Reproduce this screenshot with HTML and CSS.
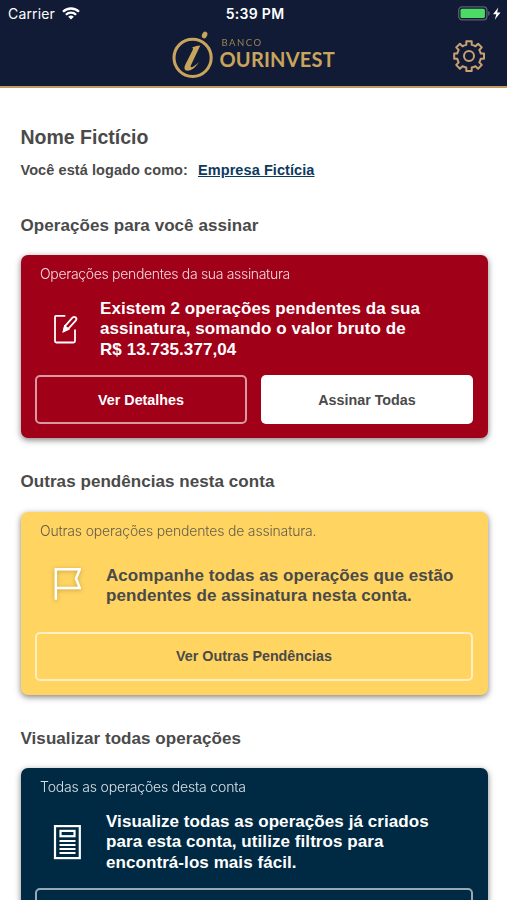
FILE: index.html
```html
<!DOCTYPE html>
<html lang="pt-BR">
<head>
  <meta charset="utf-8">
  <title>Banco Ourinvest</title>
  <link rel="stylesheet" href="styles.css">
</head>

<body>
  <div class="header">
    <div class="status-bar">
      <div class="carrier">
        <span>Carrier</span>
        <svg width="18" height="13" viewBox="0 0 18 13" fill="none" stroke="#fff" stroke-width="2.3">
          <path d="M1 4.8a11.3 11.3 0 0 1 16 0"/>
          <path d="M3.9 7.8a7.2 7.2 0 0 1 10.2 0"/>
          <path d="M9 12.6L6.2 9.8a4 4 0 0 1 5.6 0z" fill="#fff" stroke="none"/>
        </svg>
      </div>
      <div class="clock">5:39 PM</div>
      <div class="battery">
        <svg width="44" height="16" viewBox="0 0 44 16">
          <rect x="0.7" y="0.9" width="28.2" height="13" rx="3.4" fill="none" stroke="#596071" stroke-width="1.3"/>
          <rect x="2.5" y="2.7" width="24.4" height="9.4" rx="1.6" fill="#4cd964"/>
          <path d="M30.2 5c2 .5 2 4.3 0 4.8z" fill="#596071"/>
          <path d="M40.3 1.5L35 8.3h3.3L36.8 13.7l5.7-7.2h-3.4z" fill="#fff"/>
        </svg>
      </div>
    </div>
    <div class="nav">
      <div class="logo">
        <svg width="42" height="48" viewBox="0 0 42 48">
          <circle cx="20.6" cy="26.8" r="18.6" fill="none" stroke="#c9a55c" stroke-width="3"/>
          <ellipse cx="32.6" cy="4" rx="2.500" ry="3.500" transform="rotate(28 32.6 4)" fill="#c9a55c"/>
          <path d="M20 16.500C23 15.300 25.500 14.900 28.300 14.600L18.800 34.600C17.900 37.200 20.500 37 27 31.300C22.700 37.900 18.200 40 15 39.600C12 39.200 12 36.500 13.500 33.200L20.700 19C21.300 17.600 21 17 20 16.500Z" fill="#c9a55c"/>
        </svg>
        <div class="logo-text">
          <span class="logo-small">BANCO</span>
          <span class="logo-big">OURINVEST</span>
        </div>
      </div>
      <svg class="gear" width="32" height="32" viewBox="0 0 32 32" fill="none" stroke="#c9a072" stroke-width="2" stroke-linejoin="round">
        <path d="M13.3 1.2h5.4v3.6q2.2.5 3.8 1.5l2.6-2.6 3.7 3.7-2.5 2.6q1 1.6 1.4 3.5h3.3v5.2h-3.3q-.4 2-1.4 3.7l2.5 2.5-3.7 3.8-2.6-2.5q-1.7 1-3.8 1.4v3.4h-5.4v-3.4q-2-.4-3.8-1.4l-2.6 2.5-3.7-3.8 2.5-2.5q-1-1.7-1.4-3.7H1.200v-5.200h3.100q.4-1.900 1.400-3.500L3.200 7.400l3.700-3.700 2.600 2.600q1.700-1 3.800-1.500z"/>
        <circle cx="16" cy="16.1" r="5"/>
      </svg>
    </div>
  </div>

  <div class="content">
    <div class="user-name">Nome Fictício</div>
    <div class="logged">
      <span>Você está logado como:</span>
      <a class="company" href="#">Empresa Fictícia</a>
    </div>

    <div class="heading">Operações para você assinar</div>
    <div class="card card-red">
      <div class="card-label">Operações pendentes da sua assinatura</div>
      <div class="card-body">
        <svg class="card-icon" width="28" height="36" viewBox="0 0 28 36" fill="none" stroke="#fff" stroke-width="1.8">
          <path d="M12.300 3.900H3Q2 3.900 2 4.900V29Q2 30.500 3.300 30.500H20.500Q22 30.500 22 29V17.500"/>
          <path d="M10.800 19L12 14.200 19.700 5.400q1.600-1.200 3 .1 1.400 1.400.2 2.900L15 17.200z" stroke-linejoin="round"/>
          <path d="M10.600 19.300l1.300-5 3.400 2.700z" fill="#fff"/>
        </svg>
        <div class="card-text">Existem 2 operações pendentes da sua<br>assinatura, somando o valor bruto de<br>R$ 13.735.377,04</div>
      </div>
      <div class="buttons">
        <button class="button">Ver Detalhes</button>
        <button class="button button-white">Assinar Todas</button>
      </div>
    </div>

    <div class="heading">Outras pendências nesta conta</div>
    <div class="card card-yellow">
      <div class="card-label">Outras operações pendentes de assinatura.</div>
      <div class="card-body">
        <svg class="card-icon" width="28" height="36" viewBox="0 0 28 36" fill="none" stroke="#fff" stroke-width="2.5">
          <path d="M2.800 31.800V1.300H26.800L23 10.500l3.800 9.500H2.800"/>
        </svg>
        <div class="card-text">Acompanhe todas as operações que estão<br>pendentes de assinatura nesta conta.</div>
      </div>
      <div class="buttons">
        <button class="button">Ver Outras Pendências</button>
      </div>
    </div>

    <div class="heading">Visualizar todas operações</div>
    <div class="card card-blue">
      <div class="card-label">Todas as operações desta conta</div>
      <div class="card-body">
        <svg class="card-icon" width="28" height="36" viewBox="0 0 28 36" fill="none" stroke="#fff" stroke-width="2.2">
          <rect x="2" y="1.1" width="24.800" height="32"/>
          <rect x="7.500" y="5.900" width="14" height="5.300"/>
          <path d="M6.500 16h16M6.500 20h16M6.500 24h16M6.500 28h16" stroke-width="2"/>
        </svg>
        <div class="card-text">Visualize todas as operações já criados<br>para esta conta, utilize filtros para<br>encontrá-los mais fácil.</div>
      </div>
      <div class="buttons">
        <button class="button"></button>
      </div>
    </div>
  </div>
</body>
</html>
```

FILE: styles.css
```css
html,
body {
  height: 100%;
  margin: 0;
  overflow: hidden;
}

body {
  display: flex;
  flex-direction: column;
  font-family: "Liberation Sans", Arial, sans-serif;
  color: #4a4a4a;
  background: #ffffff;
}

.header {
  box-sizing: border-box;
  flex: none;
  height: 88px;
  background: #111b36;
  border-bottom: 2px solid #c39b62;
}

.status-bar {
  display: grid;
  grid-template-columns: 1fr auto 1fr;
  align-items: center;
  height: 27px;
  padding: 0 5px 0 8px;
  font-family: Inter, sans-serif;
  font-size: 14px;
  color: #ffffff;
}

.carrier {
  display: flex;
  align-items: center;
  gap: 7px;
  letter-spacing: 0.15px;
}

.clock {
  font-weight: 600;
  letter-spacing: 0.3px;
}

.battery {
  display: flex;
  justify-content: flex-end;
}

.nav {
  display: flex;
  justify-content: space-between;
  padding: 4px 22px 0 172px;
}

.logo {
  display: flex;
  gap: 5.5px;
  color: #c9a55c;
  font-family: Lato, sans-serif;
}

.logo-text {
  display: flex;
  flex-direction: column;
  padding-top: 7px;
}

.logo-small {
  font-size: 9.5px;
  line-height: 10px;
  letter-spacing: 1.5px;
  padding-left: 2px;
  opacity: 0.75;
}

.logo-big {
  margin-top: 1px;
  font-size: 20px;
  line-height: 20px;
  font-weight: bold;
  letter-spacing: 0.2px;
}

.gear {
  margin-top: 9px;
}

.content {
  flex: 1;
  min-height: 0;
  overflow: hidden;
  padding: 38px 19.5px 0 20.5px;
}

.user-name {
  font-size: 19.5px;
  line-height: 22px;
  font-weight: bold;
}

.logged {
  display: flex;
  gap: 10px;
  margin-top: 13px;
  font-size: 14.5px;
  line-height: 18px;
  font-weight: bold;
  letter-spacing: 0.08px;
}

.company {
  color: #0c3a5f;
}

.heading {
  margin: 37px 0 19px;
  font-size: 17px;
  line-height: 20px;
  font-weight: bold;
  letter-spacing: 0.06px;
}

.card {
  box-sizing: border-box;
  height: 183px;
  margin-bottom: 34px;
  padding: 10px 14.5px 14px;
  border-radius: 7px;
  box-shadow: 0 2px 6px rgba(0, 0, 0, 0.5);
  display: flex;
  flex-direction: column;
  color: #ffffff;
}

.card + .heading {
  margin-top: 0;
  margin-bottom: 19.5px;
}

.card-red {
  background: #a00018;
}

.card-yellow {
  background: #ffd460;
  color: #4a4a4a;
}

.card-blue {
  background: #002a43;
}

.card-label {
  padding-left: 5px;
  font-family: Inter, sans-serif;
  font-size: 14px;
  line-height: 18px;
  font-weight: 300;
  letter-spacing: -0.3px;
  opacity: 0.85;
}

.card-red .card-label {
  letter-spacing: -0.32px;
}

.card-yellow .card-label,
.card-blue .card-label {
  letter-spacing: -0.18px;
}

.card-body {
  flex: 1;
  display: flex;
  align-items: center;
  padding: 1px 0 0 18px;
}

.card-icon {
  margin-right: 25px;
}

.card-red .card-icon {
  margin-right: 19px;
}

.card-yellow .card-icon {
  filter: drop-shadow(0 1px 2px rgba(0, 0, 0, 0.25));
}

.card-text {
  font-size: 17px;
  line-height: 20.5px;
  font-weight: bold;
  letter-spacing: 0.07px;
  white-space: nowrap;
}

.buttons {
  display: flex;
  gap: 14px;
}

.button {
  flex: 1;
  height: 49px;
  padding: 0;
  border: 2px solid rgba(255, 255, 255, 0.6);
  border-radius: 5px;
  background: transparent;
  color: inherit;
  font-family: inherit;
  font-size: 14.3px;
  font-weight: bold;
}

.button-white {
  background: #ffffff;
  color: #4a4a4a;
}
```
